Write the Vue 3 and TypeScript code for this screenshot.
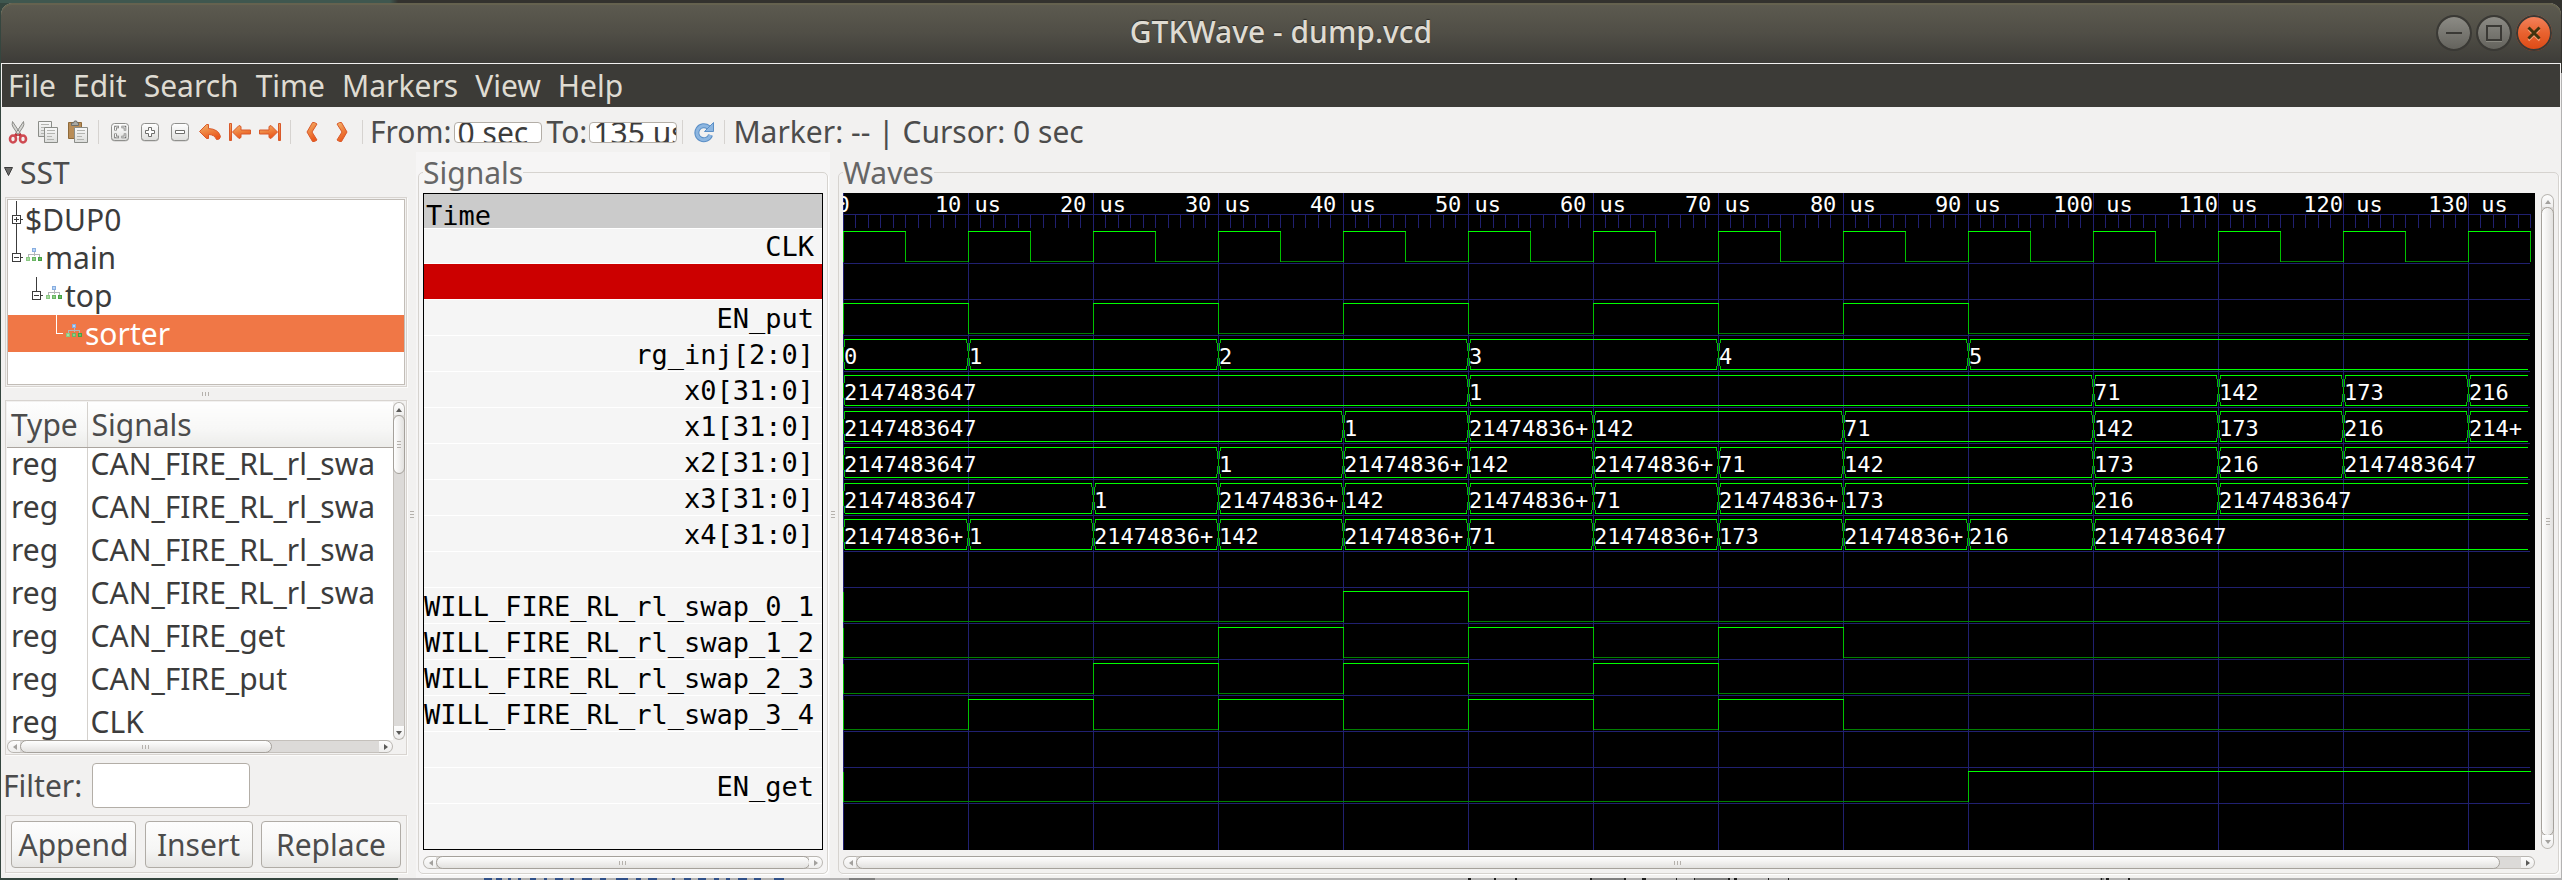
<script setup lang="ts">
import { ref } from 'vue'

type Kind = 'bit' | 'bus' | 'blank'
interface Signal {
  name: string
  kind: Kind
  high?: [number, number][]
  values?: [number, string][]
  selected?: boolean
}

const MAX = '2147483647'
const CUT = '21474836+'

// Times are counted in steps of 10 us.
const END = 13.5
const signals: Signal[] = [
  { name: 'CLK', kind: 'bit', high: Array.from({ length: 14 }, (_, k) => [k, k + 0.5] as [number, number]) },
  { name: '', kind: 'blank', selected: true },
  { name: 'EN_put', kind: 'bit', high: [[0, 1], [2, 3], [4, 5], [6, 7], [8, 9]] },
  { name: 'rg_inj[2:0]', kind: 'bus', values: [[0, '0'], [1, '1'], [3, '2'], [5, '3'], [7, '4'], [9, '5']] },
  { name: 'x0[31:0]', kind: 'bus', values: [[0, MAX], [5, '1'], [10, '71'], [11, '142'], [12, '173'], [13, '216']] },
  { name: 'x1[31:0]', kind: 'bus', values: [[0, MAX], [4, '1'], [5, CUT], [6, '142'], [8, '71'], [10, '142'], [11, '173'], [12, '216'], [13, '214+']] },
  { name: 'x2[31:0]', kind: 'bus', values: [[0, MAX], [3, '1'], [4, CUT], [5, '142'], [6, CUT], [7, '71'], [8, '142'], [10, '173'], [11, '216'], [12, MAX]] },
  { name: 'x3[31:0]', kind: 'bus', values: [[0, MAX], [2, '1'], [3, CUT], [4, '142'], [5, CUT], [6, '71'], [7, CUT], [8, '173'], [10, '216'], [11, MAX]] },
  { name: 'x4[31:0]', kind: 'bus', values: [[0, CUT], [1, '1'], [2, CUT], [3, '142'], [4, CUT], [5, '71'], [6, CUT], [7, '173'], [8, CUT], [9, '216'], [10, MAX]] },
  { name: '', kind: 'blank' },
  { name: 'WILL_FIRE_RL_rl_swap_0_1', kind: 'bit', high: [[4, 5]] },
  { name: 'WILL_FIRE_RL_rl_swap_1_2', kind: 'bit', high: [[3, 4], [5, 6], [7, 8]] },
  { name: 'WILL_FIRE_RL_rl_swap_2_3', kind: 'bit', high: [[2, 3], [4, 5], [6, 7]] },
  { name: 'WILL_FIRE_RL_rl_swap_3_4', kind: 'bit', high: [[1, 2], [3, 4], [5, 6], [7, 8]] },
  { name: '', kind: 'blank' },
  { name: 'EN_get', kind: 'bit', high: [[9, 13.5]] },
]

const STEP = 125
const ROW = 36
const FIRST_LINE = 70
const px = (t: number) => Math.floor(t * STEP)
const lineY = (i: number) => FIRST_LINE + ROW * i
const endX = px(END)

function tracePaths(s: Signal, i: number) {
  const top = lineY(i) - 32 + 0.5
  const bottom = lineY(i) - 2 + 0.5
  let hi = ''
  let lo = ''
  let edge = ''
  if (s.kind === 'bit') {
    edge += `M0.5 ${top}V${bottom}`
    let t = 0
    for (const [a, b] of s.high ?? []) {
      if (a > t) lo += `M${px(t)} ${bottom}H${px(a)}`
      hi += `M${px(a)} ${top}H${px(b) + 1}`
      if (a > 0) edge += `M${px(a) + 0.5} ${top}V${bottom}`
      if (b < END || s.name === 'CLK') edge += `M${px(b) + 0.5} ${top}V${bottom}`
      t = b
    }
    if (t < END) lo += `M${px(t)} ${bottom}H${endX}`
  } else if (s.kind === 'bus') {
    const vs = s.values ?? []
    const mid = (top + bottom) / 2
    vs.forEach(([t], k) => {
      const x = px(t) + 0.5
      const last = k === vs.length - 1
      const right = last ? endX - 2 : px(vs[k + 1][0]) - 1
      const left = px(t) + 2
      hi += `M${left} ${top}H${right}M${left} ${bottom}H${right}`
      edge += t === 0
        ? `M${x + 1} ${top}L${x} ${mid}L${x + 1} ${bottom}`
        : `M${x - 2} ${top}L${x + 2} ${bottom}M${x + 2} ${top}L${x - 2} ${bottom}`
    })
  }
  return { hi, lo, edge }
}

const traces = signals.map((s, i) => ({ ...s, i, ...tracePaths(s, i) }))

const gridPath = (() => {
  let d = `M0 21.5H${endX}`
  for (let k = 0; k <= 13; k++) d += `M${px(k) + 0.5} 0V2000`
  for (let k = 0; k <= 135; k++) {
    const x = Math.floor(k * 12.5)
    if (x <= endX) d += `M${x + 0.5} 21V35`
  }
  signals.forEach((_, i) => { d += `M1 ${lineY(i) + 0.5}H${endX}` })
  return d
})()

const ticks = Array.from({ length: 14 }, (_, k) => ({ x: px(k), label: k === 0 ? '0' : `${k * 10} us` }))

const menus = ['File', 'Edit', 'Search', 'Time', 'Markers', 'View', 'Help']

const tree = [
  { label: '$DUP0', depth: 0, icon: false, box: 'plus', guide: 'M8.5 0V14M8.5 23V38' },
  { label: 'main', depth: 0, icon: true, box: 'minus', guide: 'M8.5 0V14' },
  { label: 'top', depth: 1, icon: true, box: 'minus', guide: 'M28.5 0V14' },
  { label: 'sorter', depth: 2, icon: true, box: '', guide: 'M48.5 0V18.5H55', selected: true },
]

const facilities = [
  ['reg', 'CAN_FIRE_RL_rl_swa'],
  ['reg', 'CAN_FIRE_RL_rl_swa'],
  ['reg', 'CAN_FIRE_RL_rl_swa'],
  ['reg', 'CAN_FIRE_RL_rl_swa'],
  ['reg', 'CAN_FIRE_get'],
  ['reg', 'CAN_FIRE_put'],
  ['reg', 'CLK'],
]

const from = ref('0 sec')
const to = ref('135 us')
const filter = ref('')
</script>

<template>
  <div class="desktop">
    <div class="strip-top"></div>
    <div class="window">
      <svg class="defs" width="0" height="0" aria-hidden="true">
        <defs>
          <linearGradient id="orange" x1="0" y1="0" x2="0.4" y2="1">
            <stop offset="0" stop-color="#f3b36a" />
            <stop offset="1" stop-color="#ea5a1d" />
          </linearGradient>
          <linearGradient id="key" x1="0" y1="0" x2="0" y2="1">
            <stop offset="0" stop-color="#ffffff" />
            <stop offset="1" stop-color="#dededc" />
          </linearGradient>
          <linearGradient id="sheet" x1="0" y1="0" x2="0" y2="1">
            <stop offset="0" stop-color="#f8f8f8" />
            <stop offset="1" stop-color="#dcdddb" />
          </linearGradient>
        </defs>
      </svg>

      <header class="titlebar">
        <h1>GTKWave - dump.vcd</h1>
        <div class="wm">
          <button type="button" class="wm-btn" aria-label="Minimize">
            <svg width="36" height="36" viewBox="0 0 36 36"><path d="M10 18h16" stroke="#3a3935" stroke-width="2" /></svg>
          </button>
          <button type="button" class="wm-btn" aria-label="Maximize">
            <svg width="36" height="36" viewBox="0 0 36 36"><path d="M10 26.5h16" stroke="#8a8981" stroke-width="1" /><path d="M11 11h14v14h-14z" fill="none" stroke="#3a3935" stroke-width="2" /></svg>
          </button>
          <button type="button" class="wm-btn close" aria-label="Close">
            <svg width="36" height="36" viewBox="0 0 36 36"><path d="M12.500 14.500l11 11M23.500 14.500l-11 11" stroke="#f5a079" stroke-width="2" /><path d="M12.500 12.500l11 11M23.500 12.500l-11 11" stroke="#40330f" stroke-width="3" /></svg>
          </button>
        </div>
      </header>

      <nav class="menubar">
        <button v-for="m in menus" :key="m" type="button">{{ m }}</button>
      </nav>

      <div class="toolbar">
        <button type="button" class="tool" aria-label="Cut">
          <svg width="20" height="24" viewBox="0 0 20 24">
            <path d="M4.500 1.500Q3.500 5 5 7l6 9 1.500-2.500zM15.500 1.500Q16.500 5 15 7l-6 9-1.500-2.500z" fill="#d5d5d2" stroke="#8c8c88" stroke-width="1" />
            <path d="M9 14l-2 2M11 14l2 2" stroke="#c22f38" stroke-width="3" />
            <ellipse cx="5" cy="19" rx="3" ry="3.500" fill="none" stroke="#cf4a52" stroke-width="2.600" />
            <ellipse cx="15" cy="19" rx="3" ry="3.500" fill="none" stroke="#cf4a52" stroke-width="2.600" />
          </svg>
        </button>
        <button type="button" class="tool" aria-label="Copy">
          <svg width="22" height="24" viewBox="0 0 22 24">
            <path d="M1.500 1.500h13v15h-13z" fill="url(#sheet)" stroke="#8b8d88" />
            <path d="M4 4.500h8M4 7.500h6M4 10.500h3M4 13.500h3" stroke="#b3b4b0" />
            <path d="M7.500 7.500h13v15h-13z" fill="url(#sheet)" stroke="#8b8d88" />
            <path d="M10 10.500h8M10 13.500h8M10 16.500h5M10 19.500h7" stroke="#b3b4b0" />
          </svg>
        </button>
        <button type="button" class="tool" aria-label="Paste">
          <svg width="22" height="24" viewBox="0 0 22 24">
            <path d="M1.500 2.500h13v16h-13z" fill="#b98d57" stroke="#8f6a3a" />
            <path d="M4.500 5.500v-2.500h2l1-2h2l1 2h1v2.500z" fill="#a9aaa6" stroke="#6d6e6a" />
            <path d="M7.500 7.500h13v15h-13z" fill="url(#sheet)" stroke="#8b8d88" />
            <path d="M10 10.500h8M10 13.500h8M10 16.500h5M10 19.500h7" stroke="#b3b4b0" />
          </svg>
        </button>
        <span class="sep"></span>
        <button type="button" class="tool" aria-label="Zoom fit">
          <svg width="20" height="20" viewBox="0 0 20 20">
            <rect x="1" y="2" width="18" height="17.500" rx="4" fill="#c2c2c0" />
            <rect x="1.500" y="1.500" width="17" height="17" rx="3" fill="url(#key)" stroke="#8f8f8c" />
            <path d="M5.500 8.500v-3.500h3.500M11.500 5h3.500v3.500M15 11.500v3.500h-3.500M9 15h-3.500v-3.500" fill="none" stroke="#6f6f6c" stroke-width="2.500" />
            <path d="M5.500 8v-3h3M12 5h3v3M15 12v3h-3M8.500 15h-3v-3" fill="none" stroke="#f4f4f4" stroke-width="1" />
          </svg>
        </button>
        <button type="button" class="tool" aria-label="Zoom in">
          <svg width="20" height="20" viewBox="0 0 20 20">
            <rect x="1" y="2" width="18" height="17.500" rx="4" fill="#c2c2c0" />
            <rect x="1.500" y="1.500" width="17" height="17" rx="3" fill="url(#key)" stroke="#8f8f8c" />
            <path d="M8.500 5.500h3v3h3v3h-3v3h-3v-3h-3v-3h3z" fill="#fff" stroke="#6f6f6c" />
          </svg>
        </button>
        <button type="button" class="tool" aria-label="Zoom out">
          <svg width="20" height="20" viewBox="0 0 20 20">
            <rect x="1" y="2" width="18" height="17.500" rx="4" fill="#c2c2c0" />
            <rect x="1.500" y="1.500" width="17" height="17" rx="3" fill="url(#key)" stroke="#8f8f8c" />
            <path d="M5.500 8.500h9v3h-9z" fill="#fff" stroke="#6f6f6c" />
          </svg>
        </button>
        <button type="button" class="tool" aria-label="Zoom undo">
          <svg width="24" height="20" viewBox="0 0 24 20">
            <path d="M1.500 9.500L8.500 2.500h2v4q10 .5 12 8-.5 3.500-4 3-2-5-8-5v4h-2z" fill="url(#orange)" stroke="#d9592a" stroke-linejoin="round" />
          </svg>
        </button>
        <button type="button" class="tool" aria-label="Zoom to start">
          <svg width="24" height="20" viewBox="0 0 24 20">
            <path d="M1.500 1.500h2v17h-2z" fill="url(#orange)" stroke="#d9592a" stroke-linejoin="round" />
            <path d="M4.500 10l6.500-6.500 2 1v3.500h9.500v4h-9.500v3.500l-2 1z" fill="url(#orange)" stroke="#d9592a" stroke-linejoin="round" />
          </svg>
        </button>
        <button type="button" class="tool" aria-label="Zoom to end">
          <svg width="24" height="20" viewBox="0 0 24 20">
            <path d="M20.500 1.500h2v17h-2z" fill="url(#orange)" stroke="#d9592a" stroke-linejoin="round" />
            <path d="M19.500 10l-6.500-6.500-2 1v3.500h-9.500v4h9.500v3.500l2 1z" fill="url(#orange)" stroke="#d9592a" stroke-linejoin="round" />
          </svg>
        </button>
        <span class="sep"></span>
        <button type="button" class="tool" aria-label="Previous edge">
          <svg width="14" height="22" viewBox="0 0 14 22">
            <path d="M9.500 1.500l2.500 1.500-5 8 5 8-2.500 1.500h-2l-5.500-9.500 5.500-9.500z" fill="url(#orange)" stroke="#d9592a" stroke-linejoin="round" />
          </svg>
        </button>
        <button type="button" class="tool" aria-label="Next edge">
          <svg width="14" height="22" viewBox="0 0 14 22">
            <path d="M4.500 1.500l-2.500 1.500 5 8-5 8 2.500 1.500h2l5.500-9.500-5.500-9.500z" fill="url(#orange)" stroke="#d9592a" stroke-linejoin="round" />
          </svg>
        </button>
        <span class="sep"></span>
        <label for="from">From:</label>
        <input id="from" v-model="from" class="entry small" type="text" />
        <label for="to" class="to">To:</label>
        <input id="to" v-model="to" class="entry small" type="text" />
        <span class="sep"></span>
        <button type="button" class="tool" aria-label="Reload">
          <svg width="22" height="22" viewBox="0 0 22 22">
            <path d="M15.500 6.500A7 7 0 1 0 17.500 14" fill="none" stroke="#5b8fc6" stroke-width="5" />
            <path d="M15.500 6.500A7 7 0 1 0 17.500 14" fill="none" stroke="#8db6e0" stroke-width="3" />
            <path d="M20.500 1.500v9h-9z" fill="#8db6e0" stroke="#5b8fc6" stroke-linejoin="round" />
          </svg>
        </button>
        <span class="sep"></span>
        <output class="status">Marker: -- | Cursor: 0 sec</output>
      </div>

      <main class="body">
        <section class="sst">
          <button type="button" class="sst-head">
            <svg width="9" height="9" viewBox="0 0 9 9"><path d="M.500 .500h8l-4 8z" fill="#6a6a68" stroke="#3c3c3c" /></svg>
            SST
          </button>
          <div class="box tree-box">
            <ul class="tree">
              <li v-for="n in tree" :key="n.label" :class="{ sel: n.selected }">
                <svg :width="17 + n.depth * 20" height="38">
                  <path :d="n.guide" fill="none" stroke="currentColor" />
                  <g v-if="n.box" :transform="`translate(${n.depth * 20} 0)`">
                    <path d="M4.500 14.500h8v8h-8zM13 18.500h2M6 18.500h5" fill="none" stroke="currentColor" />
                    <path v-if="n.box === 'plus'" d="M8.500 16v5" stroke="currentColor" />
                  </g>
                </svg>
                <svg v-if="n.icon" class="mod" width="16" height="38">
                  <path d="M2.500 17.500v-2.500h11v2.500M8 12v5" fill="none" stroke="#b3b5b8" />
                  <path d="M6.500 9.500h3v3h-3z" fill="#b9d4f5" stroke="#88aee0" />
                  <path d="M.500 18.500h3v3h-3z" fill="#a8dca0" stroke="#8ac883" />
                  <path d="M6.500 18.500h3v3h-3z" fill="#8fd088" stroke="#6bb565" />
                  <path d="M12.500 18.500h3v3h-3z" fill="#6cbd66" stroke="#47a044" />
                </svg>
                <span>{{ n.label }}</span>
              </li>
            </ul>
          </div>
          <div class="grip-row"><i class="grip"></i></div>
          <div class="box list-box">
            <div class="list-view">
              <table>
                <thead>
                  <tr><th scope="col" class="type">Type</th><th scope="col">Signals</th></tr>
                </thead>
                <tbody>
                  <tr v-for="(f, i) in facilities" :key="i"><td class="type">{{ f[0] }}</td><td>{{ f[1] }}</td></tr>
                </tbody>
              </table>
            </div>
            <div class="sb v">
              <button type="button" class="step a" aria-label="Scroll up"><i class="arr up"></i></button>
              <div class="trough"><div class="thumb" :style="{ height: '19%' }"><i class="grip side"></i></div></div>
              <button type="button" class="step b" aria-label="Scroll down"><i class="arr down"></i></button>
            </div>
            <div class="sb h">
              <button type="button" class="step a" aria-label="Scroll left"><i class="arr left dim"></i></button>
              <div class="trough"><div class="thumb" :style="{ width: '70%' }"><i class="grip"></i></div></div>
              <button type="button" class="step b" aria-label="Scroll right"><i class="arr right"></i></button>
            </div>
          </div>
          <div class="filter">
            <label for="filter">Filter:</label>
            <input id="filter" v-model="filter" class="entry" type="text" />
          </div>
          <div class="box actions">
            <button type="button">Append</button>
            <button type="button" class="insert">Insert</button>
            <button type="button">Replace</button>
          </div>
        </section>

        <div class="splitter"><i class="grip side"></i></div>

        <section class="pane names">
          <fieldset>
            <legend>Signals</legend>
            <div class="frame">
              <ul class="name-list">
                <li class="time">Time</li>
                <li v-for="(s, i) in signals" :key="i" :class="{ picked: s.selected, first: i === 0 }">{{ s.name }}</li>
              </ul>
              <div class="sb h">
                <button type="button" class="step a" aria-label="Scroll names left"><i class="arr left dim"></i></button>
                <div class="trough"><div class="thumb" :style="{ width: '100%' }"><i class="grip"></i></div></div>
                <button type="button" class="step b" aria-label="Scroll names right"><i class="arr right dim"></i></button>
              </div>
            </div>
          </fieldset>
        </section>

        <div class="splitter slim"><i class="grip side"></i></div>

        <section class="pane waves">
          <fieldset>
            <legend>Waves</legend>
            <div class="frame wave-grid">
              <div class="canvas">
                <svg width="100%" height="100%">
                  <path class="grid" :d="gridPath" />
                  <g v-for="t in traces" :key="t.i">
                    <path v-if="t.lo" class="lo" :d="t.lo" />
                    <path v-if="t.edge" class="edge" :d="t.edge" />
                    <path v-if="t.hi" class="hi" :d="t.hi" />
                    <text v-for="v in t.values ?? []" :key="v[0]" :x="px(v[0]) + 1" :y="lineY(t.i) - 7">{{ v[1] }}</text>
                  </g>
                  <text v-for="k in ticks" :key="k.x" class="tick" :x="k.x" y="19">{{ k.label }}</text>
                </svg>
              </div>
              <div class="sb v">
                <button type="button" class="step a" aria-label="Scroll waves up"><i class="arr up dim"></i></button>
                <div class="trough"><div class="thumb" :style="{ height: '100%' }"><i class="grip side"></i></div></div>
                <button type="button" class="step b" aria-label="Scroll waves down"><i class="arr down dim"></i></button>
              </div>
              <div class="sb h">
                <button type="button" class="step a" aria-label="Scroll waves left"><i class="arr left dim"></i></button>
                <div class="trough"><div class="thumb" :style="{ width: '98.7%' }"><i class="grip"></i></div></div>
                <button type="button" class="step b" aria-label="Scroll waves right"><i class="arr right"></i></button>
              </div>
            </div>
          </fieldset>
        </section>
      </main>
    </div>
    <div class="strip-bottom">
      <svg width="100%" height="2" shape-rendering="crispEdges" aria-hidden="true">
        <path d="M849 1h26M1591 1h33M1694 1h34M2100 1h4" stroke="#7f7f7f" stroke-width="2" />
        <path d="M484 1h8M496 1h6M508 1h3M518 1h3M530 1h6M544 1h3M555 1h8M570 1h4M582 1h10M600 1h6M616 1h12M636 1h5M648 1h9M672 1h3M684 1h7M698 1h8M714 1h5M726 1h4M738 1h9M754 1h7M774 1h10" stroke="#2f4f88" stroke-width="2" />
        <path d="M1468 1h3M1494 1h2M1515 1h2M1590 1h2M1624 1h2M1642 1h4M1676 1h1M1694 1h1M1728 1h2M1734 1h3M1768 1h1M1788 1h1M2101 1h1M2106 1h3M2128 1h2" stroke="#1c1c1c" stroke-width="2" />
      </svg>
    </div>
  </div>
</template>

<style>
body { margin: 0; }
</style>

<style scoped>
.desktop {
  display: flex;
  flex-direction: column;
  min-height: 100vh;
  background:
    linear-gradient(#33322e, #33322e) right top / 50% 73px no-repeat,
    linear-gradient(90deg, #35463f 398px, #b3b2b2 398px);
  font-family: "Noto Sans", "Open Sans", sans-serif;
  font-size: 30px;
  color: #4c4c4c;
}
.desktop *, .desktop *::before { box-sizing: border-box; }
button, input { font: inherit; color: inherit; margin: 0; }
button { padding: 0; border: 0; background: none; }
ul { list-style: none; margin: 0; padding: 0; }
svg { display: block; flex: none; }
.defs { position: absolute; }
.strip-top { height: 3px; background: linear-gradient(90deg, #3f574f 390px, #33322e 398px); }
.strip-bottom { height: 2px; overflow: hidden; }

.window {
  flex: 1;
  display: flex;
  flex-direction: column;
  margin: 0 1px;
  border-radius: 12px 12px 0 0;
  background: #f2f1f0;
}
.titlebar {
  display: grid;
  grid-template-columns: 1fr auto 1fr;
  align-items: center;
  height: 60px;
  border-radius: 12px 12px 0 0;
  background: linear-gradient(#5d5b50, #504e46 50%, #3d3c38);
  box-shadow: inset 0 2px 0 #65624f;
}
.titlebar h1 {
  grid-column: 2;
  margin: 0;
  padding-bottom: 2px;
  font-size: 30px;
  font-weight: 500;
  line-height: 40px;
  color: #dfdbd2;
  text-shadow: 0 -1px 1px #2b2a27;
}
.wm { display: flex; justify-content: flex-end; gap: 4px; padding-right: 9px; }
.wm-btn {
  width: 36px;
  height: 36px;
  border-radius: 50%;
  background: linear-gradient(#8c8b85, #64635d) content-box;
  padding: 2px;
  overflow: hidden;
  border: 0;
  box-shadow: inset 0 0 0 2px #3a3935;
}
.wm-btn svg { margin: -2px; }
.wm-btn.close { background: linear-gradient(#f58560, #e8622f 50%, #dd4814); }

.menubar {
  display: flex;
  gap: 17px;
  margin: 1px 1px 0;
  padding: 0 6px;
  background: #3c3b37;
  color: #dfdbd2;
}
.menubar button { line-height: 43px; }

.toolbar { display: flex; align-items: center; height: 45px; padding: 5px 2px 0; }
.tool { display: grid; place-items: center; width: 30px; height: 30px; }
.sep { flex: none; width: 12px; height: 24px; background: linear-gradient(#d6d3d0, #d6d3d0) 5px 0 / 1px 100% no-repeat; }
.toolbar label, .status { line-height: 40px; white-space: nowrap; }
.toolbar label { padding: 0 2px 0 1px; }
.status { padding-left: 2px; }
.entry {
  border: 1px solid #b3aea7;
  border-radius: 4px;
  background: #fff;
  color: #3c3c3c;
  outline: 0;
}
.entry.small { width: 88px; height: 21px; padding: 0 0 0 3px; flex: none; }
.toolbar label.to { padding-left: 5px; }

.body { flex: 1; display: flex; align-items: stretch; }
.sst { width: 406px; padding-left: 4px; display: flex; flex-direction: column; }
.sst-head { display: flex; align-items: center; gap: 7px; margin-left: -1px; line-height: 41px; text-align: left; }
.sst-head svg { margin-bottom: 2px; }
.box { border: 1px solid #d8d4d0; box-shadow: 1px 1px 0 #fbfbfa; padding: 1px; }
.tree-box { margin-top: 4px; height: 190px; }
.tree { height: 100%; border: 1px solid #c2bdb7; background: #fff; padding-top: 1px; color: #3c3c3c; }
.tree li { display: flex; height: 38px; line-height: 38px; }
.tree li svg { shape-rendering: crispEdges; }
.tree li.sel { height: 37px; background: #f07746; color: #fff; }
.mod { margin: 0 3px 0 1px; }
.grip-row { display: grid; place-items: center; height: 13px; }
.grip { display: block; width: 9px; height: 4px; background: repeating-linear-gradient(90deg, #b5b1ac 0 1px, transparent 1px 3px); }
.grip.side { width: 4px; height: 8px; background: repeating-linear-gradient(#b5b1ac 0 1px, transparent 1px 3px); }

.list-box { flex: 1; display: grid; grid-template: minmax(0, 1fr) 13px / minmax(0, 1fr) 12px; min-height: 354px; }
.list-view { overflow: hidden; background: #fff; height: 338px; }
table { border-collapse: collapse; table-layout: fixed; width: 640px; color: #3c3c3c; }
th {
  height: 45px;
  padding: 0 0 0 4px;
  line-height: 43px;
  font-weight: 400;
  text-align: left;
  color: #4c4c4c;
  background: linear-gradient(#fefefe, #f7f7f6 60%, #ececea);
  border-bottom: 1px solid #aaa49e;
  white-space: nowrap;
}
td { padding: 0 0 12px 4px; line-height: 31px; white-space: nowrap; }
.type { width: 80px; border-right: 1px solid #d4d1cd; }
td:not(.type) { padding-left: 3px; }

.filter { display: flex; align-items: center; gap: 10px; height: 60px; margin-left: -2px; }
.filter .entry { width: 158px; height: 45px; padding: 0 6px; }
.actions { display: flex; justify-content: space-between; padding: 5px; margin-bottom: 5px; height: 58px; }
.actions button {
  width: 125px;
  height: 47px;
  border: 1px solid #b0aca6;
  border-radius: 4px;
  background: linear-gradient(#fdfdfd, #f6f6f5 60%, #e6e5e3);
  line-height: 42px;
}
.actions button.insert { width: 108px; }
.actions button:last-child { width: 140px; }

.splitter { display: grid; place-items: center; width: 9px; }
.splitter.slim { width: 6px; }
.pane { display: flex; padding: 0 2px 4px; }
.pane.names { width: 414px; background: #f6f5f5; }
.pane.waves { flex: 1; min-width: 0; }
fieldset {
  flex: 1;
  min-width: 0;
  margin: 0;
  padding: 0 4px 4px;
  border: 1px solid #d6d3cf;
  border-radius: 5px;
  box-shadow: 1px 1px 0 #fff;
}
legend { padding: 0; line-height: 41px; color: #666; }
.frame { display: flex; flex-direction: column; gap: 6px; }
.name-list {
  min-height: 657px;
  border: 1px solid #000;
  background: #f5f5f5;
  color: #000;
  font: 27px "DejaVu Sans Mono", "Liberation Mono", monospace;
}
.name-list li {
  height: 36px;
  padding: 2px 8px 0 0;
  border-bottom: 1px solid #fff;
  line-height: 34px;
  text-align: right;
  white-space: nowrap;
}
.name-list li.time { height: 35px; padding: 6px 0 0 2px; line-height: 31px; text-align: left; background: #cbcbcb; }
.name-list li.first { height: 35px; padding-top: 1px; }
.name-list li.picked { background: #cc0000; }
.wave-grid { display: grid; grid-template: 657px 13px / minmax(0, 1fr) 13px; }
.canvas { background: #000; overflow: hidden; }
.canvas path { fill: none; stroke-width: 1; shape-rendering: crispEdges; }
.canvas .grid { stroke: #202070; }
.canvas .lo { stroke: #008000; }
.canvas .hi { stroke: #00ff00; }
.canvas .edge { stroke: #00c000; }
.canvas text { fill: #fff; font: 22px "DejaVu Sans Mono", "Liberation Mono", monospace; }
.canvas .tick { text-anchor: middle; }

.sb { display: flex; min-width: 0; min-height: 0; }
.sb.v { flex-direction: column; }
.frame > .sb.v { padding: 1px 0; }
.sb.h { height: 13px; }
.step { flex: none; width: 14px; height: 13px; display: grid; place-items: center; border: 1px solid #b9b6b1; background: linear-gradient(#fdfdfd, #eeedec); }
.v .step { width: 100%; height: 14px; }
.h .a { border-radius: 7px 0 0 7px; border-right: 0; }
.h .b { border-radius: 0 7px 7px 0; border-left: 0; }
.v .a { border-radius: 7px 7px 0 0; border-bottom: 0; }
.v .b { border-radius: 0 0 7px 7px; border-top: 0; }
.trough { flex: 1; display: flex; min-width: 0; min-height: 0; background: #dcdad8; border: 0 solid #c4c0bb; }
.h .trough { border-width: 1px 0; margin: 0 -1px; }
.v .trough { border-width: 0 1px; margin: -1px 0; }
.thumb { display: grid; place-items: center; border: 1px solid #a5a19b; border-radius: 7px; }
.h .thumb { margin: -1px 0; background: linear-gradient(#fefefe, #f1f0ef 50%, #e2e1df); }
.v .thumb { margin: 0 -1px; width: calc(100% + 2px); background: linear-gradient(90deg, #fefefe, #f1f0ef 50%, #e2e1df); }
.arr { display: block; border: 3px solid transparent; color: #5a5a58; }
.arr.dim { color: #a3a19e; }
.arr.up { border-bottom: 4px solid; border-top: 0; }
.arr.down { border-top: 4px solid; border-bottom: 0; }
.arr.left { border-right: 4px solid; border-left: 0; }
.arr.right { border-left: 4px solid; border-right: 0; }
.arr.up, .arr.down { border-left-color: transparent; border-right-color: transparent; }
.arr.left, .arr.right { border-top-color: transparent; border-bottom-color: transparent; }
</style>
